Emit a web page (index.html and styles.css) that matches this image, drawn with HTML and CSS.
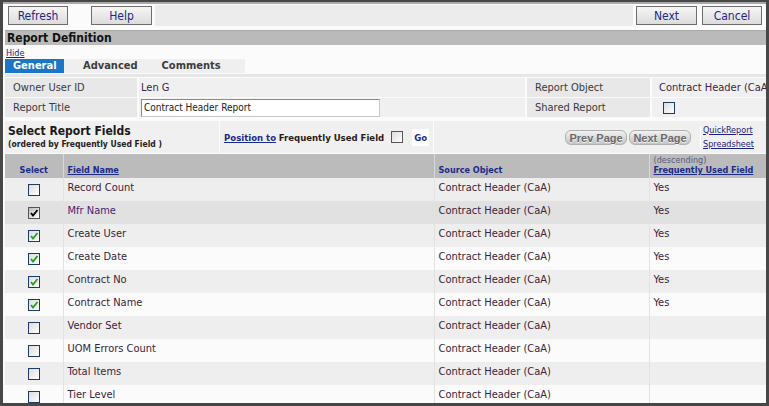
FILE: index.html
```html
<!DOCTYPE html>
<html>
<head>
<meta charset="utf-8">
<link rel="stylesheet" href="styles.css">
</head>
<body>
<div class="frame">
  <div class="toolbar">
    <div class="tb-left">
      <button class="btn btn-refresh">Refresh</button>
      <button class="btn btn-help">Help</button>
    </div>
    <div class="tb-mid"></div>
    <div class="tb-right">
      <button class="btn btn-next">Next</button>
      <button class="btn btn-cancel">Cancel</button>
    </div>
  </div>
  <div class="titlebar">Report Definition</div>
  <div class="tabzone">
    <a class="hide-link" href="#">Hide</a>
    <div class="tabs">
      <span class="tab active">General</span>
      <span class="tab t-adv">Advanced</span>
      <span class="tab t-com">Comments</span>
    </div>
  </div>
  <div class="band"></div>
  <div class="form">
    <div class="lbl">Owner User ID</div>
    <div class="val">Len G</div>
    <div class="lbl">Report Object</div>
    <div class="val val-obj">Contract Header (CaA)</div>
    <div class="lbl">Report Title</div>
    <div class="val"><span class="input">Contract Header Report</span></div>
    <div class="lbl">Shared Report</div>
    <div class="val val-obj"><span class="cb"></span></div>
  </div>
  <div class="sect">
    <div class="s-left">
      <div class="s-title">Select Report Fields</div>
      <div class="s-sub">(ordered by Frequently Used Field )</div>
    </div>
    <div class="s-mid">
      <a class="pos" href="#">Position to</a>&nbsp;<b class="fuf">Frequently Used Field</b>
      <span class="cb cb-pos"></span>
      <span class="go">Go</span>
    </div>
    <div class="s-right">
      <span class="pbtn pbtn-prev">Prev Page</span>
      <span class="pbtn">Next Page</span>
      <div class="links">
        <a href="#">QuickReport</a>
        <a href="#">Spreadsheet</a>
      </div>
    </div>
  </div>
  <table class="grid">
    <colgroup>
      <col class="c1"><col class="c2"><col class="c3"><col class="c4">
    </colgroup>
    <thead>
      <tr>
        <th class="h-sel">Select</th>
        <th><a href="#">Field Name</a></th>
        <th>Source Object</th>
        <th><span class="desc">(descending)</span><a href="#">Frequently Used Field</a></th>
      </tr>
    </thead>
    <tbody>
      <tr class="odd"><td><span class="cb"></span></td><td>Record Count</td><td>Contract Header (CaA)</td><td>Yes</td></tr>
      <tr class="hover"><td><span class="cb on dark"><svg viewBox="0 0 10 10"><path d="M2 5 L4 7.5 L8.5 2" /></svg></span></td><td class="mfr">Mfr Name</td><td>Contract Header (CaA)</td><td>Yes</td></tr>
      <tr class="odd"><td><span class="cb on"><svg viewBox="0 0 10 10"><path d="M2 5 L4 7.5 L8.5 2" /></svg></span></td><td>Create User</td><td>Contract Header (CaA)</td><td>Yes</td></tr>
      <tr><td><span class="cb on"><svg viewBox="0 0 10 10"><path d="M2 5 L4 7.5 L8.5 2" /></svg></span></td><td>Create Date</td><td>Contract Header (CaA)</td><td>Yes</td></tr>
      <tr class="odd"><td><span class="cb on"><svg viewBox="0 0 10 10"><path d="M2 5 L4 7.5 L8.5 2" /></svg></span></td><td>Contract No</td><td>Contract Header (CaA)</td><td>Yes</td></tr>
      <tr><td><span class="cb on"><svg viewBox="0 0 10 10"><path d="M2 5 L4 7.5 L8.5 2" /></svg></span></td><td>Contract Name</td><td>Contract Header (CaA)</td><td>Yes</td></tr>
      <tr class="odd"><td><span class="cb"></span></td><td>Vendor Set</td><td>Contract Header (CaA)</td><td></td></tr>
      <tr><td><span class="cb"></span></td><td>UOM Errors Count</td><td>Contract Header (CaA)</td><td></td></tr>
      <tr class="odd"><td><span class="cb"></span></td><td>Total Items</td><td>Contract Header (CaA)</td><td></td></tr>
      <tr><td><span class="cb"></span></td><td>Tier Level</td><td>Contract Header (CaA)</td><td></td></tr>
    </tbody>
  </table>
</div>
</body>
</html>
```
FILE: styles.css
```css
* { box-sizing: border-box; }
html, body { margin: 0; padding: 0; background: #fff; }
body { font-family: "DejaVu Sans Condensed", "DejaVu Sans", Verdana, sans-serif; color: #333; }

.frame {
  width: 769px;
  height: 406px;
  border: 3px solid #474747;
  border-top-width: 2px;
  background: #fbfbfb;
  overflow: hidden;
}

/* toolbar */
.toolbar {
  display: flex;
  height: 25px;
  border-top: 2px solid #a9a9a9;
}
.tb-left { width: 152px; background: #fbfbfb; display: flex; align-items: center; padding-left: 5px; }
.tb-mid { flex: 1; background: #ececec; margin: 1px 0; }
.tb-right { display: flex; align-items: center; background: #fbfbfb; padding: 0 4px 0 3px; gap: 5px; }
.btn {
  font-family: "DejaVu Sans Condensed", "DejaVu Sans", Verdana, sans-serif;
  font-size: 12px;
  color: #1b2a86;
  height: 19px;
  padding: 0;
  border: 1px solid #6e6e6e;
  background: linear-gradient(#f6f6f6, #dcdcdc);
  line-height: 16px;
}
.btn-refresh { width: 60px; }
.btn-help { width: 61px; margin-left: 23px; }
.btn-next { width: 61px; }
.btn-cancel { width: 60px; }

/* title */
.titlebar {
  margin-top: 3px;
  height: 15px;
  background: #bababa;
  border-top: 1px solid #aaa;
  font-weight: bold;
  font-size: 12px;
  color: #111;
  padding-left: 2px;
  line-height: 14px;
  margin-left: 2px;
}

.tabzone { padding: 3px 0 0 2px; height: 29px; background: #fbfbfb; }
.hide-link { display: block; font-size: 9px; color: #1a237e; margin-left: 1px; height: 11px; line-height: 10px; }
.tabs { display: flex; width: 240px; background: #efefef; height: 14px; margin-top: 0; }
.tab { font-size: 11px; font-weight: bold; color: #3c3c3c; line-height: 14px; }
.tab.active { background: #1c76c6; color: #fff; width: 59px; padding-left: 8px; }
.t-adv { margin-left: 19px; }
.t-com { margin-left: 24px; }

.band { height: 3px; background: #e6e6e6; margin-left: 2px; }

/* form */
.form {
  display: grid;
  grid-template-columns: 132px 386px 123px 1fr;
  column-gap: 2px;
  row-gap: 1px;
  padding: 1px 0 0 2px;
  background: #fbfbfb;
}
.form > div { height: 19px; line-height: 19px; font-size: 11px; white-space: nowrap; overflow: hidden; }
.lbl { background: #e8e8e8; padding-left: 8px; color: #3a3a3a; }
.val { background: #f0f0f0; padding-left: 2px; color: #3b1e4a; }
.val-obj { padding-left: 7px; }
.input {
  display: inline-block;
  margin-top: 1px;
  width: 239px;
  height: 18px;
  line-height: 15px;
  background: #fff;
  border: 1px solid #8a8a8a;
  border-right-color: #c8c8c8;
  border-bottom-color: #c8c8c8;
  font-size: 10px;
  color: #222;
  padding-left: 2px;
  vertical-align: top;
}
.form .cb { margin-left: 4px; margin-top: 4px; vertical-align: top; }

/* checkbox */
.cb {
  display: inline-block;
  width: 12px;
  height: 12px;
  border: 1px solid #1e3966;
  background: linear-gradient(135deg, #dcdcdc, #fff);
  position: relative;
}
.cb svg { display: block; width: 10px; height: 10px; fill: none; stroke: #22a022; stroke-width: 1.8; }
.cb.dark { border-color: #555; background: linear-gradient(135deg, #bbb, #fff); }
.cb.dark svg { stroke: #000; }

/* section */
.sect {
  display: grid;
  grid-template-columns: 214px 213px 1fr;
  column-gap: 1px;
  margin-top: 4px;
  padding-left: 2px;
  height: 32px;
}
.sect > div { background: #f0f0f0; }
.s-left { padding: 3px 0 0 3px; }
.s-title { font-size: 12px; font-weight: bold; color: #1a1a1a; line-height: 14px; }
.s-sub { font-size: 8.5px; font-weight: bold; color: #222; margin-top: 1px; white-space: nowrap; }
.s-mid { display: flex; align-items: center; padding-left: 4px; font-size: 9.5px; white-space: nowrap; }
.pos { color: #1a2a8a; font-weight: bold; }
.fuf { color: #2a1a1a; }
.cb-pos { margin-left: 7px; border-color: #555; }
.go { margin-left: 9px; background: #fff; color: #1a2a8a; font-weight: bold; width: 17px; height: 17px; line-height: 17px; text-align: center; }
.s-right { display: flex; align-items: center; justify-content: flex-end; padding-right: 12px; }
.pbtn {
  font-family: "Liberation Sans", Arial, sans-serif;
  font-size: 11px;
  color: #6a6a6a;
  font-weight: bold;
  height: 15px;
  line-height: 14px;
  width: 62px;
  text-align: center;
  border-radius: 6px;
  background: linear-gradient(#f2f2f2, #c4c4c4);
  border: 1px solid #b0b0b0;
  margin-left: 2px;
  text-shadow: 0 1px 0 #f4f4f4;
}
.pbtn-prev { width: 62px; }
.links { display: flex; flex-direction: column; margin-left: 9px; gap: 5px; border-left: 1px solid #fff; padding-left: 2px; }
.links a { font-size: 9px; color: #1a237e; line-height: 9px; }

/* table */
.grid {
  margin-left: 2px;
  margin-top: 1px;
  border-collapse: collapse;
  table-layout: fixed;
  width: 761px;
}
.c1 { width: 58px; }
.c2 { width: 371px; }
.c3 { width: 215px; }
.c4 { width: 117px; }
.grid th {
  background: #bbbbbb;
  height: 24px;
  font-size: 9px;
  font-weight: bold;
  color: #1a2a8a;
  text-align: left;
  vertical-align: bottom;
  padding: 0 0 3px 4px;
  border-left: 1px solid #d8d8d8;
  line-height: 10px;
  white-space: nowrap;
}
.grid th:first-child { border-left: 0; text-align: center; padding-left: 0; }
.grid th a { color: #1a2a8a; }
.desc { display: block; color: #5a5a7a; font-weight: normal; }
.grid td {
  height: 23px;
  font-size: 11px;
  color: #3a2438;
  padding: 0 0 5px 4px;
  vertical-align: middle;
  border-left: 1px solid #e2e2e2;
  white-space: nowrap;
  background: #fbfbfb;
}
.grid td:first-child { border-left: 0; text-align: center; padding: 4px 0 0 0; }
.grid tr.odd td { background: #eeeeee; }
.grid tr.hover td { background: #e1e1e1; }
.grid td.mfr { color: #4a2274; }
```
